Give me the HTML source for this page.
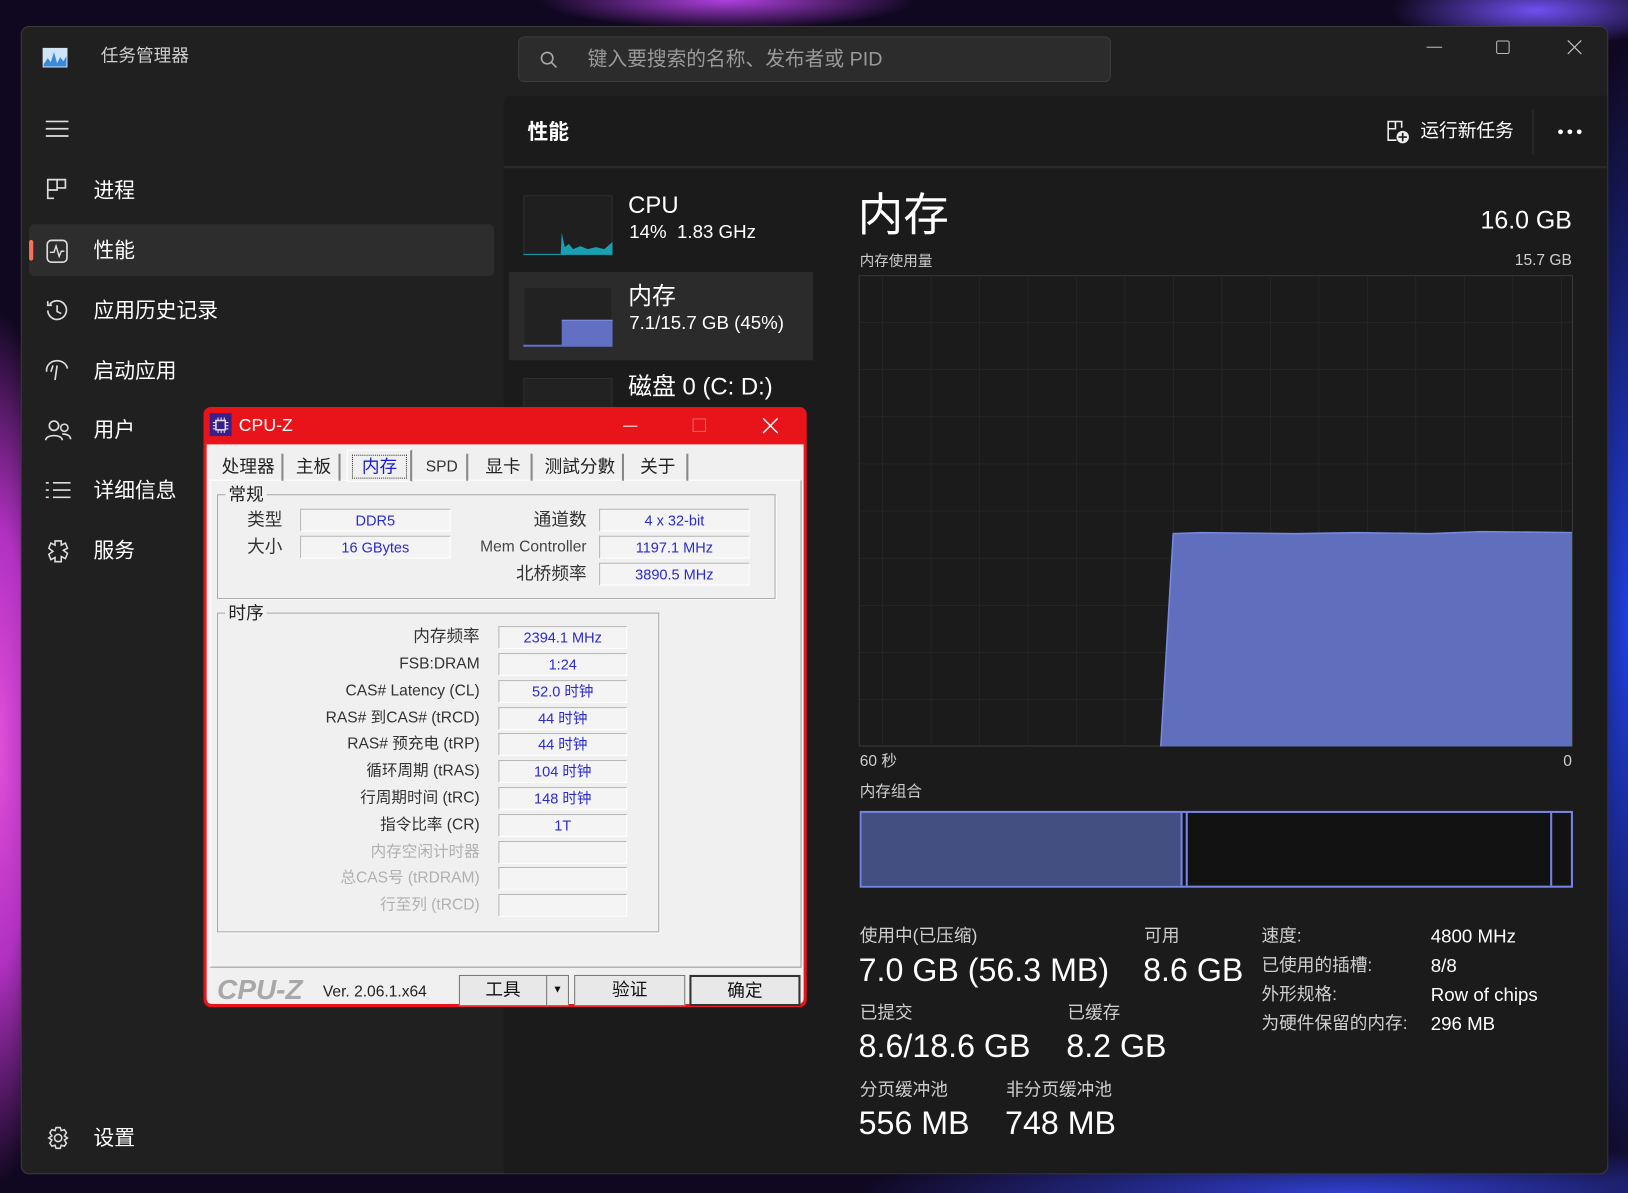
<!DOCTYPE html>
<html><head><meta charset="utf-8"><style>
*{margin:0;padding:0;box-sizing:border-box}
html,body{width:1628px;height:1193px;overflow:hidden;background:#0a0614}
#s{position:absolute;left:0;top:0;width:1568px;height:1149px;transform:scale(1.03827);transform-origin:0 0;font-family:"Liberation Sans","Noto Sans CJK SC",sans-serif}
.a{position:absolute;white-space:nowrap}
.c{position:absolute;white-space:nowrap;line-height:30px;height:30px}
.w{color:#fff}
.g{color:#cfcfcf}
.f{position:absolute;background:#f4f4f4;border:1px solid #b8b8b8;border-right-color:#fff;border-bottom-color:#fff;color:#2a2ad0;font-size:14px;text-align:center;line-height:20px;height:22px}
.l{position:absolute;color:#333;font-size:16px;text-align:right;line-height:22px;height:22px;white-space:nowrap}
.d{color:#b0b0b0}
.tab{position:absolute;top:437px;height:26px;font-size:17px;line-height:26px;color:#222;text-align:center;border-right:2px solid #888}
.btn{position:absolute;top:939px;height:30px;border:1px solid #777;background:#e8e8e8;font-size:17px;line-height:28px;text-align:center;color:#111}
</style></head><body><div id="s">
<!-- wallpaper -->
<div class="a" style="left:0;top:0;width:1568px;height:1149px;background:
radial-gradient(ellipse 60px 420px at 0px 720px,#e050d8,#b030c0 50%,transparent 100%),
radial-gradient(ellipse 260px 40px at 700px 0px,#b040e0,transparent 70%),
radial-gradient(ellipse 200px 50px at 1480px 10px,#7050f0,transparent 70%),
radial-gradient(ellipse 80px 700px at 1568px 600px,#2040e0,transparent 80%),
radial-gradient(ellipse 600px 60px at 1300px 1149px,#3040d0,transparent 80%),
#100820"></div>
<!-- window -->
<div class="a" style="left:20px;top:25px;width:1529px;height:1106px;background:#202020;border-radius:8px;border:1px solid #3a3a3a"></div>
<div class="a" style="left:485px;top:92px;width:1063px;height:1038px;background:#1b1b1b;border-top-left-radius:8px;border-bottom-right-radius:8px"></div>
<div class="a" style="left:485px;top:160px;width:1063px;height:2px;background:#2a2a2a"></div>
<!-- title -->
<svg class="a" style="left:41px;top:46px" width="24" height="19"><rect x="0" y="0" width="24" height="19" fill="#cfe4f5"/><path d="M1 16 L5 10 L8 14 L11 4 L14 15 L17 9 L20 13 L23 8 L23 18 L1 18Z" fill="#3a8ad8"/></svg>
<div class="c g" style="left:97px;top:39px;font-size:17px">任务管理器</div>
<div class="a" style="left:499px;top:35px;width:571px;height:44px;background:#2c2c2c;border:1px solid #3c3c3c;border-radius:6px"></div>
<svg class="a" style="left:520px;top:49px" width="18" height="18"><circle cx="7" cy="7" r="5.5" stroke="#aaa" stroke-width="1.5" fill="none"/><path d="M11 11 L16 16" stroke="#aaa" stroke-width="1.5"/></svg>
<div class="c" style="left:566px;top:43px;font-size:19px;color:#9a9a9a">键入要搜索的名称、发布者或 PID</div>
<div class="a" style="left:1374px;top:45px;width:15px;height:1px;background:#bbb"></div>
<div class="a" style="left:1441px;top:39px;width:13px;height:13px;border:1px solid #bbb;border-radius:2px"></div>
<svg class="a" style="left:1509px;top:38px" width="15" height="15"><path d="M1 1L14 14M14 1L1 14" stroke="#bbb" stroke-width="1.2"/></svg>
<!-- sidebar -->
<svg class="a" style="left:44px;top:115px" width="22" height="18"><path d="M0 2H22M0 9H22M0 16H22" stroke="#ddd" stroke-width="1.6"/></svg>
<div class="a" style="left:28px;top:216px;width:448px;height:50px;background:#2d2d2d;border-radius:5px"></div>
<div class="a" style="left:28px;top:231px;width:4px;height:20px;background:#f5735a;border-radius:2px"></div>
<svg class="a" style="left:44px;top:171px" width="22" height="22"><path d="M2 2H11V12H2ZM11 2H19V10H11M2 12V20H8" stroke="#ddd" stroke-width="1.6" fill="none"/></svg>
<div class="c w" style="left:90px;top:169px;font-size:20px">进程</div>
<svg class="a" style="left:44px;top:230px" width="22" height="24"><rect x="1.5" y="1.5" width="19" height="21" rx="4" stroke="#ddd" stroke-width="1.6" fill="none"/><path d="M4 13H8L10 7L13 17L15 12H18" stroke="#ddd" stroke-width="1.4" fill="none"/></svg>
<div class="c w" style="left:90px;top:227px;font-size:20px">性能</div>
<svg class="a" style="left:43px;top:287px" width="24" height="24"><path d="M5 6A9 9 0 1 1 3 12M3 3V7H7M12 7V13L16 15" stroke="#ddd" stroke-width="1.6" fill="none"/></svg>
<div class="c w" style="left:90px;top:285px;font-size:20px">应用历史记录</div>
<svg class="a" style="left:43px;top:346px" width="24" height="22"><path d="M2 12A10 9 0 0 1 22 9M12 6L10 20M8 6L6 12" stroke="#ddd" stroke-width="1.6" fill="none"/></svg>
<div class="c w" style="left:90px;top:343px;font-size:20px">启动应用</div>
<svg class="a" style="left:43px;top:403px" width="26" height="24"><circle cx="9" cy="7" r="4.5" stroke="#ddd" stroke-width="1.6" fill="none"/><circle cx="19" cy="9" r="3.5" stroke="#ddd" stroke-width="1.5" fill="none"/><path d="M1 21C1 15 17 15 17 21M17 15C22 15 25 17 25 20" stroke="#ddd" stroke-width="1.6" fill="none"/></svg>
<div class="c w" style="left:90px;top:400px;font-size:20px">用户</div>
<svg class="a" style="left:44px;top:463px" width="24" height="18"><path d="M0 2H3M7 2H24M0 9H3M7 9H24M0 16H3M7 16H24" stroke="#ddd" stroke-width="1.6"/></svg>
<div class="c w" style="left:90px;top:458px;font-size:20px">详细信息</div>
<svg class="a" style="left:44px;top:519px" width="24" height="24"><path d="M9 2H15V6L19 4L21 9L17 11L21 14L19 19L15 17V22H9V18L5 20L3 15L7 12L3 9L5 4L9 6Z" stroke="#ddd" stroke-width="1.5" fill="none"/></svg>
<div class="c w" style="left:90px;top:516px;font-size:20px">服务</div>
<svg class="a" style="left:44px;top:1084px" width="24" height="24"><circle cx="12" cy="12" r="3.5" stroke="#ddd" stroke-width="1.5" fill="none"/><path d="M10 2H14L15 5L18 4L20 7L18 10L21 12L18 14L20 17L18 20L15 19L14 22H10L9 19L6 20L4 17L6 14L3 12L6 10L4 7L6 4L9 5Z" stroke="#ddd" stroke-width="1.5" fill="none"/></svg>
<div class="c w" style="left:90px;top:1082px;font-size:20px">设置</div>
<!-- header -->
<div class="c w" style="left:508px;top:113px;font-size:20px;font-weight:bold">性能</div>
<svg class="a" style="left:1335px;top:115px" width="24" height="24"><path d="M2 2H9V9H2ZM9 2H15V8M2 9V20H10" stroke="#eee" stroke-width="1.5" fill="none"/><circle cx="16" cy="17" r="6" fill="#eee"/><path d="M16 13V21M12 17H20" stroke="#1b1b1b" stroke-width="1.6"/></svg>
<div class="c w" style="left:1368px;top:111px;font-size:18px">运行新任务</div>
<div class="a" style="left:1476px;top:105px;width:1px;height:44px;background:#333"></div>
<svg class="a" style="left:1499px;top:123px" width="26" height="8"><circle cx="4" cy="4" r="2.3" fill="#fff"/><circle cx="13" cy="4" r="2.3" fill="#fff"/><circle cx="22" cy="4" r="2.3" fill="#fff"/></svg>
<!-- perf list -->
<div class="a" style="left:504px;top:188px;width:86px;height:58px;background:#1f1f1f;border:1px solid #2e2e2e"></div>
<svg class="a" style="left:504px;top:188px" width="86" height="58"><path d="M0 57H36L37 36L40 50L44 47L48 52L55 49L62 52L70 50L78 52L86 45V57Z" fill="#1a9fb0"/><path d="M0 57H86" stroke="#1a9fb0"/></svg>
<div class="c w" style="left:605px;top:182px;font-size:23px">CPU</div>
<div class="c w" style="left:606px;top:208px;font-size:18px">14%&nbsp; 1.83 GHz</div>
<div class="a" style="left:490px;top:262px;width:293px;height:85px;background:#2b2b2b"></div>
<div class="a" style="left:504px;top:276px;width:86px;height:58px;background:#222;border:1px solid #2e2e2e"></div>
<div class="a" style="left:541px;top:308px;width:49px;height:26px;background:#6170c2;border-top:1px solid #8090e0"></div>
<div class="a" style="left:504px;top:332px;width:37px;height:2px;background:#6170c2"></div>
<div class="c w" style="left:605px;top:270px;font-size:23px">内存</div>
<div class="c w" style="left:606px;top:296px;font-size:18px">7.1/15.7 GB (45%)</div>
<div class="a" style="left:504px;top:364px;width:86px;height:30px;background:#222;border:1px solid #2e2e2e"></div>
<div class="c w" style="left:605px;top:357px;font-size:23px">磁盘 0 (C: D:)</div>
<!-- main -->
<div class="c w" style="left:826px;top:180px;font-size:44px;height:56px;line-height:56px">内存</div>
<div class="c w" style="right:54px;top:198px;font-size:24px">16.0 GB</div>
<div class="c g" style="left:828px;top:236px;font-size:14px">内存使用量</div>
<div class="c g" style="right:54px;top:236px;font-size:15px">15.7 GB</div>
<svg class="a" style="left:827px;top:265px" width="689" height="455">
<defs><pattern id="gr" width="46.7" height="45.4" patternUnits="userSpaceOnUse" x="-24"><path d="M0 0V45.4M0 0H46.7" stroke="#2c2c2c" stroke-width="1" fill="none"/></pattern></defs>
<rect x="0.5" y="0.5" width="687" height="453" fill="url(#gr)" stroke="#3a3a3a"/>
<path d="M291 454L303 249L330 248L420 249L480 248L550 249L600 247L687 248V454Z" fill="#5f6fbd"/>
<path d="M291 454L303 249L330 248L420 249L480 248L550 249L600 247L687 248" stroke="#7888dd" stroke-width="1.5" fill="none"/>
</svg>
<div class="c g" style="left:828px;top:719px;font-size:15px">60 秒</div>
<div class="c g" style="right:54px;top:719px;font-size:15px">0</div>
<div class="c g" style="left:828px;top:748px;font-size:15px">内存组合</div>
<div class="a" style="left:828px;top:781px;width:687px;height:74px;border:2px solid #7585e6;background:#121212"></div>
<div class="a" style="left:830px;top:783px;width:308px;height:70px;background:#434f80"></div>
<div class="a" style="left:1137px;top:783px;width:2px;height:70px;background:#7585e6"></div>
<div class="a" style="left:1142px;top:783px;width:2px;height:70px;background:#7585e6"></div>
<div class="a" style="left:1493px;top:783px;width:2px;height:70px;background:#7585e6"></div>
<div class="c g" style="left:828px;top:887px;font-size:17px">使用中(已压缩)</div>
<div class="c w" style="left:827px;top:915px;font-size:31px;height:40px;line-height:40px">7.0 GB (56.3 MB)</div>
<div class="c g" style="left:1102px;top:887px;font-size:17px">可用</div>
<div class="c w" style="left:1101px;top:915px;font-size:31px;height:40px;line-height:40px">8.6 GB</div>
<div class="c g" style="left:828px;top:961px;font-size:17px">已提交</div>
<div class="c w" style="left:827px;top:988px;font-size:31px;height:40px;line-height:40px">8.6/18.6 GB</div>
<div class="c g" style="left:1028px;top:961px;font-size:17px">已缓存</div>
<div class="c w" style="left:1027px;top:988px;font-size:31px;height:40px;line-height:40px">8.2 GB</div>
<div class="c g" style="left:828px;top:1035px;font-size:17px">分页缓冲池</div>
<div class="c w" style="left:827px;top:1062px;font-size:31px;height:40px;line-height:40px">556 MB</div>
<div class="c g" style="left:969px;top:1035px;font-size:17px">非分页缓冲池</div>
<div class="c w" style="left:968px;top:1062px;font-size:31px;height:40px;line-height:40px">748 MB</div>
<div class="c g" style="left:1215px;top:887px;font-size:17px">速度:</div>
<div class="c g" style="left:1215px;top:915px;font-size:17px">已使用的插槽:</div>
<div class="c g" style="left:1215px;top:943px;font-size:17px">外形规格:</div>
<div class="c g" style="left:1215px;top:971px;font-size:17px">为硬件保留的内存:</div>
<div class="c w" style="left:1378px;top:887px;font-size:18px">4800 MHz</div>
<div class="c w" style="left:1378px;top:915px;font-size:18px">8/8</div>
<div class="c w" style="left:1378px;top:943px;font-size:18px">Row of chips</div>
<div class="c w" style="left:1378px;top:971px;font-size:18px">296 MB</div>
<!-- CPU-Z -->
<div class="a" style="left:196px;top:392px;width:581px;height:578px;background:#e8141a;border-radius:7px"></div>
<div class="a" style="left:199px;top:428px;width:575px;height:539px;background:#f0f0f0;border-radius:0 0 5px 5px"></div>
<div class="a" style="left:202px;top:398px;width:21px;height:22px;background:#3a1e8a"></div>
<svg class="a" style="left:204px;top:401px" width="17" height="17"><rect x="4" y="4" width="9" height="9" fill="none" stroke="#ddd" stroke-width="1.5"/><path d="M6 1V4M9 1V4M12 1V4M6 13V16M9 13V16M12 13V16M1 6H4M1 9H4M1 12H4M13 6H16M13 9H16M13 12H16" stroke="#ddd"/></svg>
<div class="c w" style="left:230px;top:395px;font-size:17px">CPU-Z</div>
<div class="a" style="left:600px;top:410px;width:14px;height:1px;background:#fff"></div>
<div class="a" style="left:667px;top:403px;width:13px;height:13px;border:1px solid #f06068"></div>
<svg class="a" style="left:734px;top:402px" width="16" height="16"><path d="M1 1L15 15M15 1L1 15" stroke="#fff" stroke-width="1.4"/></svg>
<div class="a" style="left:202px;top:462px;width:570px;height:470px;border:1px solid #fff;border-right-color:#999;border-bottom-color:#999;background:#f0f0f0"></div>
<div class="tab" style="left:207px;width:66px">处理器</div>
<div class="tab" style="left:278px;width:50px">主板</div>
<div class="a" style="left:334px;top:433px;width:63px;height:31px;background:#f0f0f0;border:1px solid #fff;border-right:2px solid #888"></div>
<div class="a" style="left:339px;top:438px;width:53px;height:23px;border:1px dotted #333;color:#1a1ad0;font-size:17px;line-height:21px;text-align:center">内存</div>
<div class="tab" style="left:402px;width:49px;font-size:15px;color:#333">SPD</div>
<div class="tab" style="left:458px;width:55px">显卡</div>
<div class="tab" style="left:518px;width:83px">测試分數</div>
<div class="tab" style="left:606px;width:57px">关于</div>
<!-- 常规 -->
<div class="a" style="left:209px;top:476px;width:538px;height:101px;border:1px solid #aaa;box-shadow:1px 1px 0 #fff"></div>
<div class="a" style="left:217px;top:466px;background:#f0f0f0;padding:0 3px;font-size:17px;color:#222;line-height:22px">常规</div>
<div class="l" style="left:200px;width:72px;top:490px;font-size:17px">类型</div>
<div class="l" style="left:200px;width:72px;top:516px;font-size:17px">大小</div>
<div class="f" style="left:289px;top:490px;width:145px">DDR5</div>
<div class="f" style="left:289px;top:516px;width:145px">16 GBytes</div>
<div class="l" style="left:400px;width:165px;top:490px;font-size:17px">通道数</div>
<div class="l" style="left:400px;width:165px;top:516px;font-size:15px;color:#444">Mem Controller</div>
<div class="l" style="left:400px;width:165px;top:542px;font-size:17px">北桥频率</div>
<div class="f" style="left:577px;top:490px;width:145px">4 x 32-bit</div>
<div class="f" style="left:577px;top:516px;width:145px">1197.1 MHz</div>
<div class="f" style="left:577px;top:542px;width:145px">3890.5 MHz</div>
<!-- 时序 -->
<div class="a" style="left:209px;top:590px;width:426px;height:308px;border:1px solid #aaa;box-shadow:1px 1px 0 #fff"></div>
<div class="a" style="left:217px;top:580px;background:#f0f0f0;padding:0 3px;font-size:17px;color:#222;line-height:22px">时序</div>
<div class="l" style="left:220px;width:242px;top:603px">内存频率</div>
<div class="l" style="left:220px;width:242px;top:629px;font-size:15px">FSB:DRAM</div>
<div class="l" style="left:220px;width:242px;top:655px;font-size:15px">CAS# Latency (CL)</div>
<div class="l" style="left:220px;width:242px;top:681px;font-size:15px">RAS# 到CAS# (tRCD)</div>
<div class="l" style="left:220px;width:242px;top:706px;font-size:15px">RAS# 预充电 (tRP)</div>
<div class="l" style="left:220px;width:242px;top:732px;font-size:15px">循环周期 (tRAS)</div>
<div class="l" style="left:220px;width:242px;top:758px;font-size:15px">行周期时间 (tRC)</div>
<div class="l" style="left:220px;width:242px;top:784px;font-size:15px">指令比率 (CR)</div>
<div class="l d" style="left:220px;width:242px;top:810px;font-size:15px">内存空闲计时器</div>
<div class="l d" style="left:220px;width:242px;top:835px;font-size:15px">总CAS号 (tRDRAM)</div>
<div class="l d" style="left:220px;width:242px;top:861px;font-size:15px">行至列 (tRCD)</div>
<div class="f" style="left:480px;top:603px;width:124px">2394.1 MHz</div>
<div class="f" style="left:480px;top:629px;width:124px">1:24</div>
<div class="f" style="left:480px;top:655px;width:124px">52.0 时钟</div>
<div class="f" style="left:480px;top:681px;width:124px">44 时钟</div>
<div class="f" style="left:480px;top:706px;width:124px">44 时钟</div>
<div class="f" style="left:480px;top:732px;width:124px">104 时钟</div>
<div class="f" style="left:480px;top:758px;width:124px">148 时钟</div>
<div class="f" style="left:480px;top:784px;width:124px">1T</div>
<div class="f" style="left:480px;top:810px;width:124px"></div>
<div class="f" style="left:480px;top:835px;width:124px"></div>
<div class="f" style="left:480px;top:861px;width:124px"></div>
<!-- bottom -->
<div class="a" style="left:209px;top:936px;font-size:27px;font-weight:bold;font-style:italic;color:#a8a8a8;line-height:34px">CPU-Z</div>
<div class="a" style="left:311px;top:944px;font-size:15px;color:#222;line-height:24px">Ver. 2.06.1.x64</div>
<div class="btn" style="left:442px;width:85px">工具</div>
<div class="btn" style="left:526px;width:22px;font-size:10px">▼</div>
<div class="btn" style="left:553px;width:107px">验证</div>
<div class="btn" style="left:664px;width:107px;border:2px solid #333">确定</div>
</div></body></html>
